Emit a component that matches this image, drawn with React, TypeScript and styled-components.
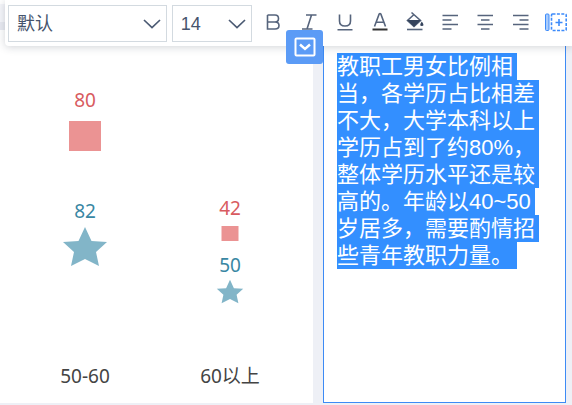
import React from "react";
import styled, { createGlobalStyle } from "styled-components";

const GlobalStyle = createGlobalStyle`
  * { box-sizing: border-box; }
  html, body, #root { height: 100%; }
  body {
    margin: 0;
    background: #eef0f6;
    font-family: "Noto Sans", "Noto Sans CJK SC", sans-serif;
    overflow: hidden;
  }
`;

const Page = styled.div`
  display: flex;
  flex-direction: column;
  min-height: 100%;
`;

const Header = styled.header`
  display: flex;
  position: relative;
  z-index: 1;
  background: #ffffff;
`;

const CanvasEdge = styled.div`
  flex: 0 0 5px;
  background: linear-gradient(#ffffff 4px, #f5f6fa 4px 22px, #e8eaf1 22px 30px, #ffffff 30px);
`;

const Toolbar = styled.div`
  flex: 1;
  min-width: 0;
  display: flex;
  align-items: flex-start;
  height: 46px;
  padding: 5px 0 0 3px;
  background: #ffffff;
  border-radius: 0 0 0 4px;
  box-shadow: 0 1px 8px rgba(40, 50, 70, 0.22);
`;

const SelectBox = styled.label<{ $grow: number }>`
  flex: ${(p) => p.$grow} 1 0;
  display: grid;
  align-items: center;
  height: 37px;
  margin-right: 5px;
  border: 1px solid #d3dae0;
  color: #4b5a73;

  select, svg { grid-area: 1 / 1; }
  svg { justify-self: end; margin-right: 5px; pointer-events: none; }
`;

const Select = styled.select`
  appearance: none;
  width: 100%;
  height: 35px;
  padding: 0 28px 0 8px;
  border: 0;
  background: transparent;
  color: #46546c;
  font: 18px/24px "Liberation Sans", "Noto Sans CJK SC", sans-serif;
  outline: none;
`;

const Tools = styled.div`
  flex: 0 0 auto;
  display: flex;
`;

const ToolButton = styled.button<{ $active?: boolean }>`
  display: grid;
  place-items: center;
  width: 35px;
  height: 33px;
  padding: 0;
  border: 0;
  background: transparent;
  color: ${(p) => (p.$active ? "#3d8bfa" : "#56647c")};
`;

const Workspace = styled.main`
  flex: 1;
  display: grid;
  grid-template-columns: 313fr 243fr;
  column-gap: 10px;
  padding: 0 6px 2px 0;
`;

const ChartPanel = styled.section`
  background: #ffffff;
  min-width: 0;

  svg { display: block; width: 100%; height: auto; }
  text { font-size: 19px; text-anchor: middle; }
`;

const TextPanel = styled.section`
  position: relative;
  min-width: 0;
  padding: 7px 0 0 13px;
  background: #ffffff;
  border: 1px solid #3d8bf5;
  border-top: 0;
`;

const Editor = styled.div`
  font: 22px/27px "Liberation Sans", "Noto Sans CJK SC", sans-serif;
  color: #ffffff;
  outline: none;
`;

const SelectedLine = styled.div`
  width: fit-content;
  height: 27px;
  padding-right: 4px;
  background: #338fff;
  white-space: nowrap;
`;

const PanelMenu = styled.button`
  position: absolute;
  top: -16px;
  left: -38px;
  z-index: 2;
  display: grid;
  place-items: center;
  width: 37px;
  height: 34px;
  padding: 0;
  border: 0;
  border-radius: 3px;
  background: #5b9bf6;
  color: #ffffff;
`;

function Chevron() {
  return (
    <svg width="18" height="10" viewBox="0 0 18 10" fill="none" stroke="currentColor" strokeWidth="1.7">
      <path d="M1 1 9 8.5 17 1" />
    </svg>
  );
}

const line = { fill: "none", stroke: "currentColor", strokeWidth: 1.6 };

const tools: { name: string; active?: boolean; art: React.ReactNode }[] = [
  {
    name: "加粗",
    art: <path {...line} d="M4.5 5H12q3.5 0 3.5 3.5T12 12H4.5M12 12q4 0 4 3.500T12 19H4.500V5" />,
  },
  { name: "斜体", art: <path {...line} d="M8 5h10.500M4 19h10.500M13.500 5 9 19" /> },
  { name: "下划线", art: <path {...line} d="M6.500 4.500V11q0 5 5.500 5t5.500-5V4.500M4.500 19.800h15" /> },
  {
    name: "文字颜色",
    art: (
      <>
        <path {...line} d="M6.500 16.500 11.200 4q.8-1 1.600 0l4.700 12.500M8.200 12.200h7.600" />
        <path d="M4.500 19.500h15" stroke="#333333" strokeWidth="2" />
      </>
    ),
  },
  {
    name: "填充颜色",
    art: (
      <>
        <path {...line} d="m8.500 2.500 9 8-6.500 6-6.500-6 6-5.500" />
        <path fill="#35445d" d="M4 10h13.800L11 16.700ZM18.800 11.500q3.400 4.500 0 4.600-3.200-.1 0-4.600Z" />
        <path {...line} d="M4 19.500h15.500" />
      </>
    ),
  },
  { name: "左对齐", art: <path {...line} d="M4.500 5.500h15.500M4.500 10h9M4.500 14.500h15.500M4.500 19h9" /> },
  { name: "居中对齐", art: <path {...line} d="M4.500 5.500H20M8 10h8.500M4.500 14.500H20M8 19h8.500" /> },
  { name: "右对齐", art: <path {...line} d="M5 5.500h15.500M11.500 10h9M5 14.500h15.500M11.500 19h9" /> },
  {
    name: "插入字段",
    active: true,
    art: (
      <>
        <rect x="2.500" y="4" width="3.500" height="16.500" rx="1" fill="#a9ccfc" stroke="currentColor" />
        <rect x="8.500" y="4" width="14.700" height="16.500" rx="1" fill="none" stroke="currentColor" strokeWidth="1.600" strokeDasharray="3 1.400" />
        <path {...line} d="M16 9v7M12.500 12.500h7" />
      </>
    ),
  },
];

function Star({ x, y, size }: { x: number; y: number; size: number }) {
  return (
    <path
      transform={`translate(${x} ${y}) scale(${size})`}
      fill="#82b5c8"
      d="M0-22 6.500-8 22-7 11 3 14 17 0 10-14 17-11 3-22-7-6.500-8Z"
    />
  );
}

const groups = [
  { label: "50-60", x: 85, top: { value: 80, textY: 61, y: 75, w: 32, h: 30 }, bottom: { value: 82, textY: 172, y: 203, size: 1 } },
  { label: "60以上", x: 230, top: { value: 42, textY: 169, y: 180, w: 17, h: 15 }, bottom: { value: 50, textY: 226, y: 247, size: 0.6 } },
];

function Chart() {
  return (
    <svg viewBox="0 0 313 357" role="img" aria-label="年龄分布">
      {groups.map((g) => (
        <g key={g.label}>
          <text x={g.x} y={g.top.textY} fill="#d85b60">{g.top.value}</text>
          <rect x={g.x - g.top.w / 2} y={g.top.y} width={g.top.w} height={g.top.h} fill="#eb9393" />
          <text x={g.x} y={g.bottom.textY} fill="#3987a3">{g.bottom.value}</text>
          <Star x={g.x} y={g.bottom.y} size={g.bottom.size} />
          <text x={g.x} y="337" fill="#444444">{g.label}</text>
        </g>
      ))}
    </svg>
  );
}

const lines = [
  "教职工男女比例相",
  "当，各学历占比相差",
  "不大，大学本科以上",
  "学历占到了约80%，",
  "整体学历水平还是较",
  "高的。年龄以40~50",
  "岁居多，需要酌情招",
  "些青年教职力量。",
];

export default function App() {
  return (
    <Page>
      <GlobalStyle />
      <Header>
        <CanvasEdge />
        <Toolbar role="toolbar">
          <SelectBox $grow={2}>
            <Select aria-label="字体" defaultValue="默认">
              <option>默认</option>
            </Select>
            <Chevron />
          </SelectBox>
          <SelectBox $grow={1}>
            <Select aria-label="字号" defaultValue="14">
              <option>14</option>
            </Select>
            <Chevron />
          </SelectBox>
          <Tools>
            {tools.map((t) => (
              <ToolButton key={t.name} aria-label={t.name} $active={t.active}>
                <svg width="24" height="24" viewBox="0 0 24 24">{t.art}</svg>
              </ToolButton>
            ))}
          </Tools>
        </Toolbar>
      </Header>
      <Workspace>
        <ChartPanel>
          <Chart />
        </ChartPanel>
        <TextPanel>
          <Editor contentEditable suppressContentEditableWarning role="textbox" aria-label="文本内容" spellCheck={false}>
            {lines.map((l) => (
              <SelectedLine key={l}>{l}</SelectedLine>
            ))}
          </Editor>
          <PanelMenu aria-label="展开菜单">
            <svg width="22" height="20" viewBox="0 0 22 20" fill="none" stroke="currentColor" strokeWidth="2">
              <rect x="1.500" y="1.500" width="19" height="17" rx="1" />
              <path d="m6 7.500 5 4.500 5-4.500" strokeWidth="2.400" />
            </svg>
          </PanelMenu>
        </TextPanel>
      </Workspace>
    </Page>
  );
}
